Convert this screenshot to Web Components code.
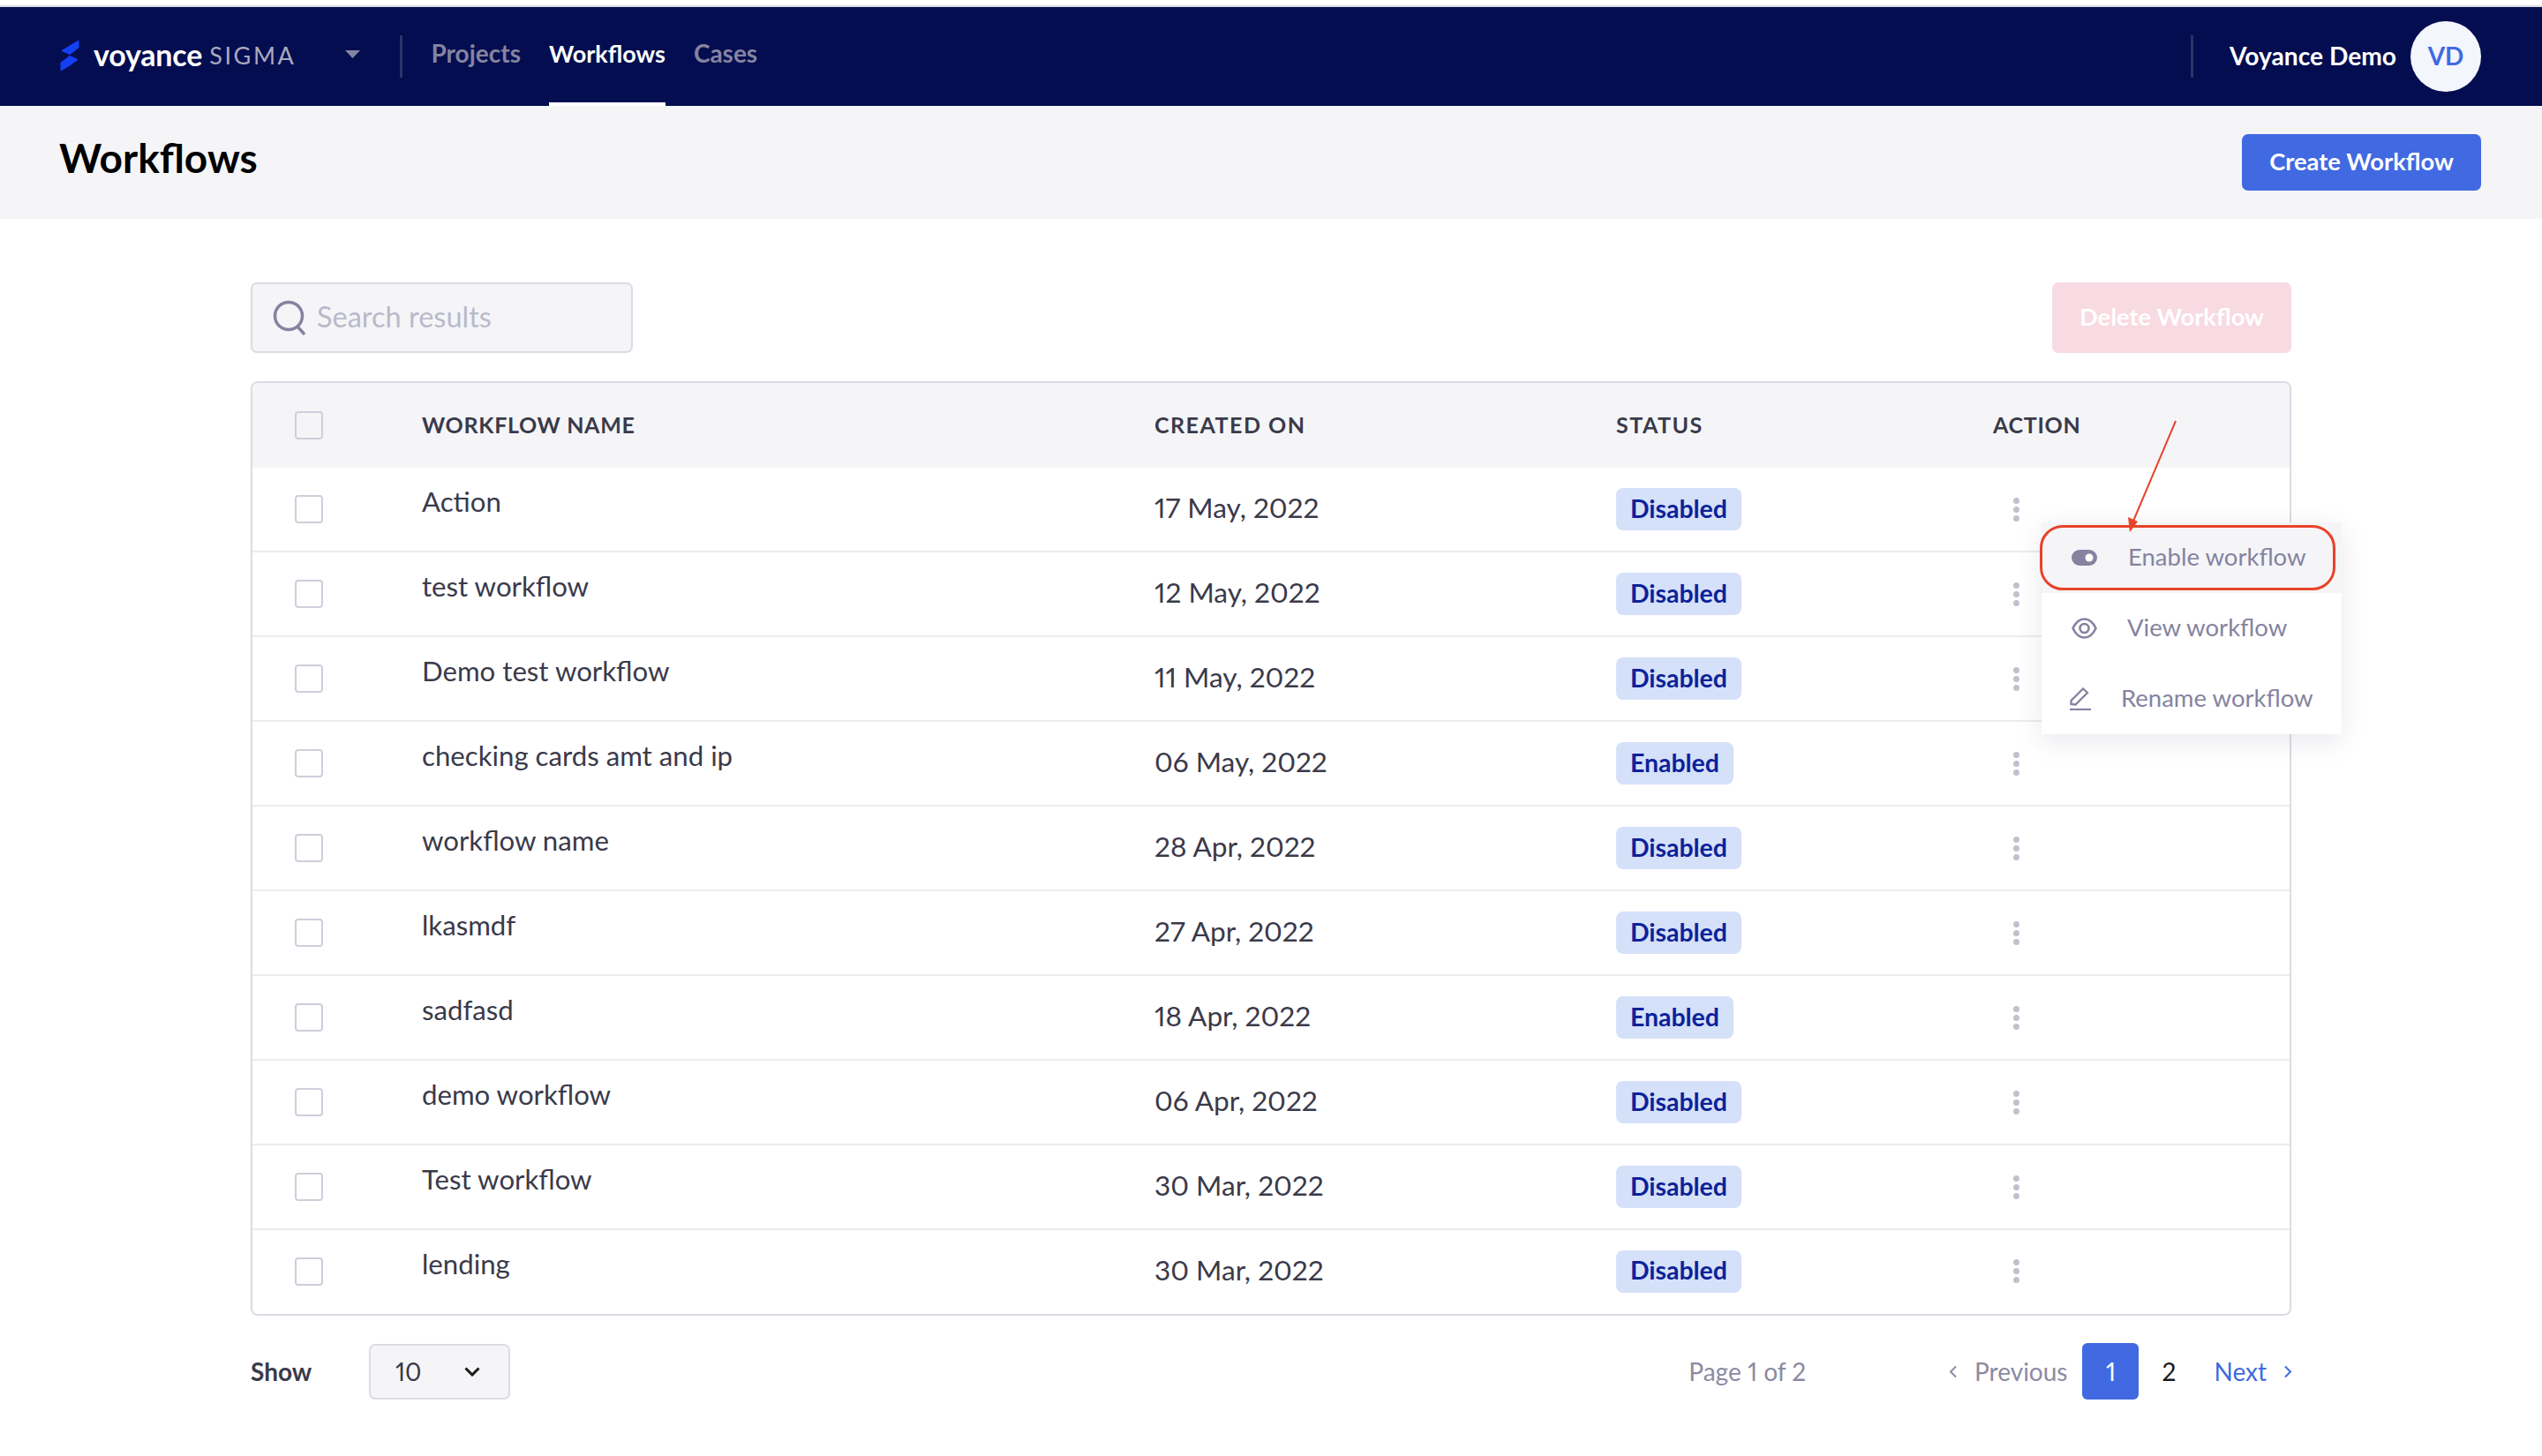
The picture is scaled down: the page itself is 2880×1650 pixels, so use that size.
<!DOCTYPE html>
<html lang="en">
  <head>
    <meta charset="utf8" />
    <title>Workflows</title>
    <style>
      html, body {
        margin: 0;
        background: #fff;
      }
      body {
        font-family: Lato, "Liberation Sans", sans-serif;
        font-variant-numeric: proportional-nums;
        color: #3a3a4a;
      }
    </style>
  </head>
  <body>
    <workflow-page></workflow-page>

    <template id="nav-bar">
      <style>
        :host {
          display: flex;
          align-items: center;
          height: 112px;
          margin-top: 8px;
          padding: 0 69px 0 68px;
          background: #030d50;
          box-shadow: 0 -2px 0 #dcdbe4;
          font-size: 28px;
          font-weight: 700;
        }
        .logo { width: 22px; height: 36px; margin-right: 16px; margin-bottom: 2px; }
        .brand { color: #fff; font-size: 34px; font-weight: 700; letter-spacing: -0.2px; padding-bottom: 5px; }
        .sigma { color: #a9a9bd; font-size: 27px; font-weight: 400; letter-spacing: 2.6px; margin-left: 8px; padding-bottom: 3px; }
        .caret { width: 17px; height: 9px; margin-left: 56px; margin-top: -6px; }
        .rule { width: 3px; height: 48px; background: #2c3468; }
        .rule.first { margin-left: 45px; margin-right: 32px; }
        .links { display: flex; align-self: stretch; gap: 32px; }
        .links a {
          display: flex;
          align-items: center;
          padding-bottom: 4px;
          color: #8583a0;
          border-bottom: 4px solid transparent;
        }
        .links a.on { color: #fff; border-bottom-color: #fff; font-size: 27px; }
        .spacer { flex: 1; }
        .user { color: #fff; font-size: 28.2px; margin-left: 41px; margin-right: 16px; padding-bottom: 3px; }
        .avatar {
          display: flex;
          align-items: center;
          justify-content: center;
          width: 80px;
          height: 80px;
          border-radius: 50%;
          background: #f3f6fc;
          color: #4169e1;
          font-size: 28px;
          box-sizing: border-box;
          padding-bottom: 2px;
        }
      </style>
      <svg class="logo" viewBox="0 0 22 36"><path fill="#1440f5" stroke="#1440f5" stroke-linejoin="round" d="M21 1V9L11 16.500 2 12.500ZM11 18.500 20 22.500 11 29 1 35V26Z" /></svg>
      <span class="brand">voyance</span><span class="sigma">SIGMA</span>
      <svg class="caret" viewBox="0 0 17 9"><path fill="#8583a0" d="M0 0H17L8.500 9Z" /></svg>
      <span class="rule first"></span>
      <div class="links"><a>Projects</a><a class="on">Workflows</a><a>Cases</a></div>
      <span class="spacer"></span>
      <span class="rule"></span>
      <span class="user">Voyance Demo</span>
      <span class="avatar">VD</span>
    </template>

    <template id="page-head">
      <style>
        :host {
          display: flex;
          justify-content: space-between;
          height: 128px;
          padding: 32px 69px 0 67px;
          box-sizing: border-box;
          background: #f5f5f8;
        }
        h1 {
          margin: 2px 0 0;
          color: #000;
          font-size: 46px;
          font-weight: 700;
          line-height: 50px;
        }
      </style>
      <h1><slot></slot></h1>
      <slot name="action"></slot>
    </template>

    <template id="solid-button">
      <style>
        :host {
          display: flex;
          align-items: center;
          justify-content: center;
          box-sizing: border-box;
          width: 271px;
          height: 64px;
          padding-bottom: 3px;
          border-radius: 7px;
          background: #4169e1;
          color: #fff;
          font-size: 27.3px;
          font-weight: 700;
        }
        :host([pale]) {
          height: 80px;
          background: #f8dae2;
        }
      </style>
      <slot></slot>
    </template>

    <template id="search-box">
      <style>
        :host {
          display: flex;
          align-items: center;
          box-sizing: border-box;
          width: 433px;
          height: 80px;
          padding-left: 23px;
          border: 2px solid #dcdbe4;
          border-radius: 7px;
          background: #f5f5f8;
          color: #bab9ca;
          font-size: 32.5px;
        }
        svg { width: 40px; height: 40px; margin-right: 10px; }
        span { margin-bottom: 3px; }
      </style>
      <svg viewBox="0 0 40 40" fill="none" stroke="#8583a0" stroke-width="3.500"><circle cx="18" cy="18" r="15.500" /><path d="M28 30 36 39" /></svg>
      <span><slot></slot></span>
    </template>

    <template id="check-box">
      <style>
        :host {
          display: block;
          box-sizing: border-box;
          width: 32px;
          height: 32px;
          border: 2px solid #cfcedb;
          border-radius: 4px;
          background: #fff;
        }
      </style>
    </template>

    <template id="status-badge">
      <style>
        :host {
          display: inline-flex;
          align-items: center;
          box-sizing: border-box;
          height: 48px;
          padding: 0 16px 3px;
          border-radius: 8px;
          background: #d5e0f9;
          color: #0c2299;
          font-size: 28.4px;
          font-weight: 700;
        }
      </style>
      <slot></slot>
    </template>

    <template id="table-row">
      <style>
        :host {
          display: grid;
          grid-template-columns: 192px 830px 523px 427px 1fr;
          align-items: center;
          height: 96px;
          box-sizing: border-box;
          border-bottom: 2px solid #ebebef;
          font-size: 31.2px;
        }
        :host(:last-child) { height: 95px; border-bottom-color: transparent; }
        check-box { margin-left: 48px; }
        .name { margin-top: -18px; }
        .date { padding-bottom: 4px; font-size: 31.6px; }
        .dots { display: flex; flex-direction: column; gap: 3px; margin-left: 23px; }
        .dots i { width: 7px; height: 7px; border-radius: 50%; background: #c1c0cf; }
      </style>
      <check-box></check-box>
      <span class="name"></span>
      <span class="date"></span>
      <span><status-badge></status-badge></span>
      <span class="dots"><i></i><i></i><i></i></span>
    </template>

    <template id="table-head">
      <style>
        :host {
          display: grid;
          grid-template-columns: 192px 830px 523px 427px 1fr;
          align-items: center;
          height: 96px;
          background: #f5f5f8;
          font-size: 25px;
          font-weight: 700;
          letter-spacing: 1.5px;
        }
        span { padding-bottom: 3px; }
        .long { letter-spacing: 0.7px; }
        check-box { margin-left: 48px; background: #f5f5f8; }
      </style>
      <check-box></check-box>
      <span class="long">WORKFLOW NAME</span>
      <span>CREATED ON</span>
      <span>STATUS</span>
      <span class="long">ACTION</span>
    </template>

    <template id="row-menu">
      <style>
        :host {
          position: absolute;
          left: 2313px;
          top: 592px;
          width: 340px;
          background: #fff;
          box-shadow: 0 8px 28px rgba(40, 40, 80, 0.10);
          color: #8583a0;
          font-size: 27.5px;
        }
        .item { display: flex; align-items: center; height: 80px; }
        .item.on { background: #f5f5f8; }
        .item span { margin-bottom: 3px; }
        svg { flex: none; }
        .mark { position: absolute; left: -2px; top: 3px; width: 335px; height: 74px; box-sizing: border-box; border: 3px solid #e8432a; border-radius: 26px; }
      </style>
      <div class="item on">
        <svg style="margin: 0 35px 0 34px" width="29" height="18" viewBox="0 0 29 18"><rect width="29" height="18" rx="9" fill="#8583a0" /><circle cx="20" cy="9" r="4.500" fill="#fff" /></svg>
        <span>Enable workflow</span>
      </div>
      <div class="item">
        <svg style="margin: 0 34px 0 34px" width="29" height="24" viewBox="0 0 29 24" fill="none" stroke="#8583a0" stroke-width="2.600"><path d="M1.500 12C5 4.500 9.500 1.500 14.500 1.500S24 4.500 27.500 12C24 19.500 19.500 22.500 14.500 22.500S5 19.500 1.500 12Z" /><circle cx="14.500" cy="12" r="5" /></svg>
        <span>View workflow</span>
      </div>
      <div class="item">
        <svg style="margin: 0 34px 0 32px" width="24" height="26" viewBox="0 0 24 26" fill="none" stroke="#8583a0" stroke-width="2.300"><path d="M1.500 19V15L15 1.500 20 6 6.500 19.500Z" /><path d="M0 25H24" /></svg>
        <span>Rename workflow</span>
      </div>
      <div class="mark"></div>
    </template>

    <template id="page-foot">
      <style>
        :host {
          display: flex;
          align-items: center;
          height: 64px;
          margin-top: 31px;
          font-size: 28px;
        }
        .show { width: 134px; font-weight: 700; }
        .select {
          display: flex;
          align-items: center;
          justify-content: space-between;
          box-sizing: border-box;
          width: 160px;
          height: 63px;
          padding: 0 32px 0 28px;
          border: 2px solid #dcdbe4;
          border-radius: 7px;
          background: #f5f5f8;
        }
        .count { margin-left: auto; margin-right: 161px; color: #8c8aa2; }
        .prev { display: flex; align-items: center; color: #8c8aa2; }
        .num {
          display: flex;
          align-items: center;
          justify-content: center;
          width: 64px;
          height: 64px;
          margin-left: 17px;
          border-radius: 6px;
          color: #1a1a1a;
        }
        .num.on { background: #4169e1; color: #fff; }
        .num + .num { margin-left: 2px; }
        .next { display: flex; align-items: center; margin-left: 19px; color: #4169e1; margin-right: -2px; }
      </style>
      <span class="show">Show</span>
      <span class="select">10
        <svg width="18" height="11" viewBox="0 0 18 11" fill="none" stroke="#1a1a1a" stroke-width="3"><path d="M1.500 1.500 9 9 16.500 1.500" /></svg>
      </span>
      <span class="count">Page 1 of 2</span>
      <span class="prev">
        <svg style="margin-right: 19px" width="11" height="15" viewBox="0 0 11 15" fill="none" stroke="#8c8aa2" stroke-width="2"><path d="M9 1.500 3 7.500 9 13.500" /></svg>
        Previous
      </span>
      <span class="num on">1</span>
      <span class="num">2</span>
      <span class="next">Next
        <svg style="margin-left: 19px" width="11" height="15" viewBox="0 0 11 15" fill="none" stroke="#4169e1" stroke-width="2"><path d="M2 1.500 8 7.500 2 13.500" /></svg>
      </span>
    </template>

    <template id="workflow-page">
      <style>
        :host { display: block; position: relative; height: 1650px; overflow: hidden; }
        main { padding: 72px 284px 0 284px; }
        .bar { display: flex; justify-content: space-between; }
        .table {
          margin-top: 32px;
          border: 2px solid #dcdbe4;
          border-radius: 8px;
          overflow: hidden;
        }
        .arrow { position: absolute; left: 2400px; top: 470px; }
      </style>
      <nav-bar></nav-bar>
      <page-head>Workflows<solid-button slot="action">Create Workflow</solid-button></page-head>
      <main>
        <div class="bar">
          <search-box>Search results</search-box>
          <solid-button pale>Delete Workflow</solid-button>
        </div>
        <div class="table" id="rows"><table-head></table-head></div>
        <page-foot></page-foot>
      </main>
      <row-menu></row-menu>
      <svg class="arrow" width="80" height="140" viewBox="0 0 80 140"><path d="M65 7 15 125" stroke="#e8432a" stroke-width="2" fill="none" /><path d="M13 133 11 116 22 121Z" fill="#e8432a" /></svg>
    </template>

    <script>
      const ROWS = [
        ["Action", "17 May, 2022", "Disabled"],
        ["test workflow", "12 May, 2022", "Disabled"],
        ["Demo test workflow", "11 May, 2022", "Disabled"],
        ["checking cards amt and ip", "06 May, 2022", "Enabled"],
        ["workflow name", "28 Apr, 2022", "Disabled"],
        ["lkasmdf", "27 Apr, 2022", "Disabled"],
        ["sadfasd", "18 Apr, 2022", "Enabled"],
        ["demo workflow", "06 Apr, 2022", "Disabled"],
        ["Test workflow", "30 Mar, 2022", "Disabled"],
        ["lending", "30 Mar, 2022", "Disabled"],
      ]

      class Base extends HTMLElement {
        connectedCallback() {
          if (!this.shadowRoot) {
            this.attachShadow({ mode: "open" })
            this.shadowRoot.appendChild(document.getElementById(this.localName).content.cloneNode(true))
            this.ready()
          }
        }
        ready() {}
      }

      class TableRow extends Base {
        ready() {
          const root = this.shadowRoot
          root.querySelector(".name").textContent = this.data[0]
          root.querySelector(".date").textContent = this.data[1]
          root.querySelector("status-badge").textContent = this.data[2]
        }
      }

      class WorkflowPage extends Base {
        ready() {
          const rows = this.shadowRoot.getElementById("rows")
          ROWS.forEach((data) => {
            const row = document.createElement("table-row")
            row.data = data
            rows.appendChild(row)
          })
        }
      }

      for (const name of ["nav-bar", "page-head", "solid-button", "search-box", "check-box", "status-badge", "table-head", "row-menu", "page-foot"]) {
        customElements.define(name, class extends Base {})
      }
      customElements.define("table-row", TableRow)
      customElements.define("workflow-page", WorkflowPage)
    </script>
  </body>
</html>
